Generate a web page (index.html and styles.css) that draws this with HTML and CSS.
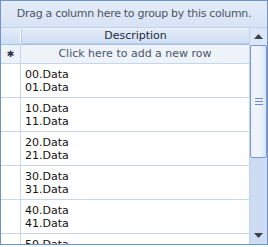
FILE: index.html
```html
<!DOCTYPE html>
<html lang="en">
<head>
    <meta charset="UTF-8">
    <title>Grid</title>
    <link rel="stylesheet" href="styles.css">
</head>
<body>
    <div class="grid">
        <div class="group-panel">Drag a column here to group by this column.</div>
        <div class="grid-body">
            <div class="rows">
                <div class="row header-row">
                    <div class="indicator"></div>
                    <div class="cell header-cell">Description</div>
                </div>
                <div class="row new-row">
                    <div class="indicator"><span class="star">&#x2731;</span></div>
                    <div class="cell new-cell">Click here to add a new row</div>
                </div>
                <div class="row data-row">
                    <div class="indicator"></div>
                    <div class="cell data-cell">00.Data<br>01.Data</div>
                </div>
                <div class="row data-row">
                    <div class="indicator"></div>
                    <div class="cell data-cell">10.Data<br>11.Data</div>
                </div>
                <div class="row data-row">
                    <div class="indicator"></div>
                    <div class="cell data-cell">20.Data<br>21.Data</div>
                </div>
                <div class="row data-row">
                    <div class="indicator"></div>
                    <div class="cell data-cell">30.Data<br>31.Data</div>
                </div>
                <div class="row data-row">
                    <div class="indicator"></div>
                    <div class="cell data-cell">40.Data<br>41.Data</div>
                </div>
                <div class="row data-row">
                    <div class="indicator"></div>
                    <div class="cell data-cell">50.Data<br>51.Data</div>
                </div>
            </div>
            <div class="scrollbar">
                <div class="scroll-btn">
                    <svg width="9" height="5" viewBox="0 0 9 5"><path d="M0 5 L4.5 0 L9 5 Z" fill="#3b3f48"/></svg>
                </div>
                <div class="track">
                    <div class="thumb">
                        <div class="grip"></div>
                    </div>
                </div>
                <div class="scroll-btn">
                    <svg width="9" height="5" viewBox="0 0 9 5"><path d="M0 0 L9 0 L4.5 5 Z" fill="#3b3f48"/></svg>
                </div>
            </div>
        </div>
    </div>
</body>
</html>
```

FILE: styles.css
```css
body {
    margin: 0;
    background: #fff;
    font-family: Tahoma, "DejaVu Sans", sans-serif;
    font-size: 11px;
}
.grid {
    width: 266px;
    height: 243px;
    border: 1px solid #6f93cd;
    display: flex;
    flex-direction: column;
    overflow: hidden;
}
.group-panel {
    height: 26px;
    line-height: 26px;
    text-align: center;
    color: #4a5568;
    background: linear-gradient(#e4ecf8, #d7e3f4);
    border-bottom: 1px solid #c0d2ec;
    white-space: nowrap;
    letter-spacing: -0.3px;
}
.grid-body {
    flex: 1;
    display: flex;
    min-height: 0;
}
.rows {
    flex: 1;
    overflow: hidden;
}
.row {
    display: flex;
    border-bottom: 1px solid #c5d6ee;
}
.indicator {
    width: 19px;
    flex: none;
    border-right: 1px solid #c5d6ee;
    display: flex;
    align-items: center;
    justify-content: center;
}
.cell {
    flex: 1;
}
.header-row {
    height: 16px;
    background: linear-gradient(#e3ecf8, #cfdef3);
    border-bottom-color: #a9c1e4;
}
.header-row .indicator {
    border-right-color: #ffffff;
}
.header-cell {
    text-align: center;
    line-height: 14px;
    color: #1e2a3c;
    border: 1px solid #b4c9e8;
    border-right: none;
    border-top-color: #f2f6fc;
}
.new-row {
    height: 18px;
    background: #eef3fa;
}
.new-cell {
    text-align: center;
    line-height: 18px;
    color: #4a5568;
}
.star {
    color: #2a2f4e;
    font-size: 9px;
}
.data-row {
    height: 33px;
}
.data-cell {
    padding: 4px 0 0 4px;
    line-height: 13px;
    color: #111;
}
.scrollbar {
    width: 17px;
    flex: none;
    display: flex;
    flex-direction: column;
    background: #cddcf2;
    border-left: 1px solid #c0d2ec;
}
.scroll-btn {
    height: 17px;
    flex: none;
    display: flex;
    align-items: center;
    justify-content: center;
    background: #dbe6f6;
}
.scroll-btn:last-child {
    background: #cddcf2;
}
.track {
    flex: 1;
}
.thumb {
    height: 111px;
    border: 1px solid #7b9ccf;
    border-radius: 2px;
    background: linear-gradient(90deg, #eef3fb 60%, #d6e3f6);
    display: flex;
    align-items: center;
    justify-content: center;
}
.grip {
    width: 8px;
    height: 5px;
    border-top: 1px solid #6b8ec8;
    border-bottom: 1px solid #6b8ec8;
    position: relative;
}
.grip::after {
    content: "";
    position: absolute;
    left: 0;
    right: 0;
    top: 2px;
    border-top: 1px solid #6b8ec8;
}
```
